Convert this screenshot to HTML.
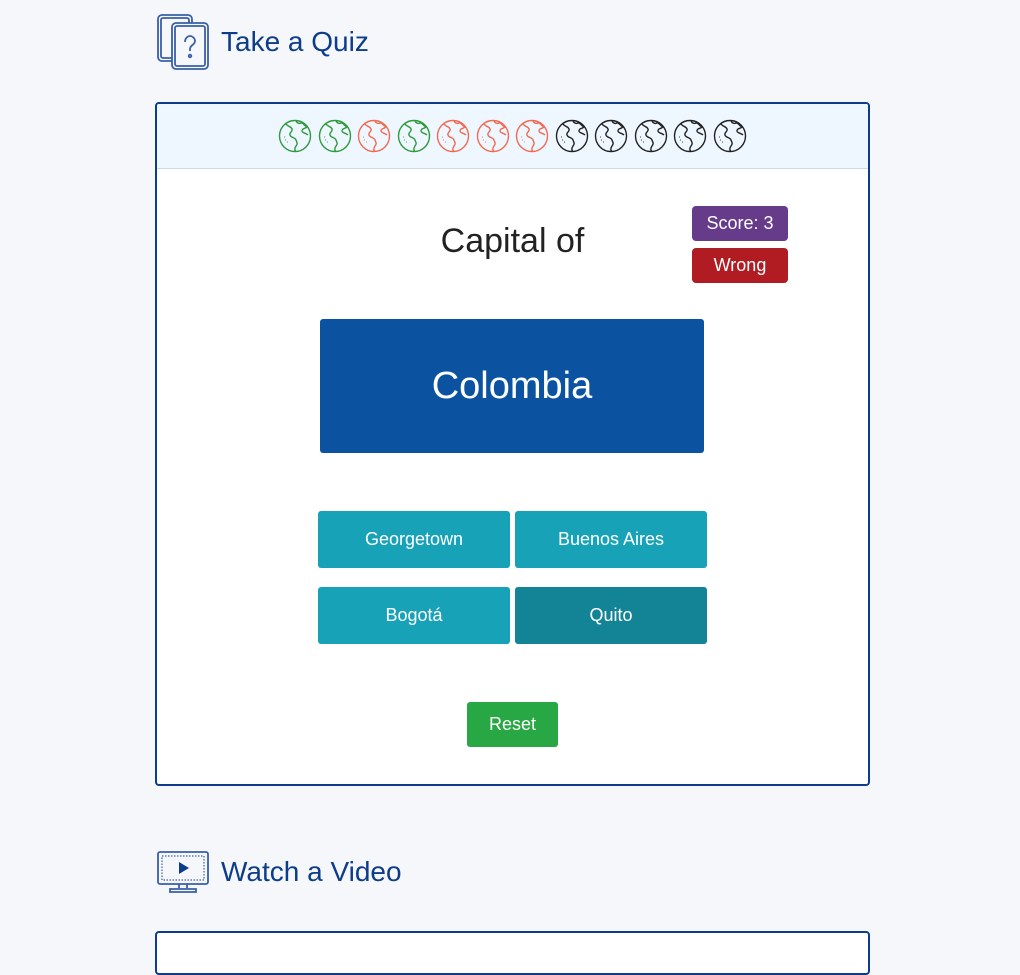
<!DOCTYPE html>
<html><head><meta charset="utf-8"><style>
body{margin:0;background:#f5f7fb;font-family:"Liberation Sans",sans-serif;width:1020px;height:945px;overflow:hidden;position:relative}
.h{position:absolute;left:157px;color:#0d3d8a;font-size:28px;display:flex;align-items:center}
.h span{margin-left:12px}
.card{position:absolute;left:155px;top:102px;width:711px;height:680px;border:2px solid #0d3d8a;border-radius:4px;background:#fff;overflow:hidden}
.top{height:64px;background:#eef6ff;border-bottom:1px solid #cfd8e3;display:flex;justify-content:center;align-items:center;gap:5.5px}
.title{position:absolute;left:0;width:711px;top:118px;text-align:center;font-size:34px;color:#222}
.badge{position:absolute;left:535px;width:96px;height:35px;border-radius:4px;color:#fff;font-size:18px;text-align:center;line-height:35px}
.country{position:absolute;left:163px;top:215px;width:384px;height:134px;background:#0b53a1;color:#fff;font-size:38px;text-align:center;line-height:134px;border-radius:3px}
.btn{position:absolute;width:192px;height:57px;background:#17a2b8;color:#fff;font-size:18px;text-align:center;line-height:56px;border-radius:3px}
.reset{position:absolute;left:310px;top:598px;width:91px;height:45px;background:#28a745;color:#fff;font-size:18px;text-align:center;line-height:45px;border-radius:3px}
.card2{position:absolute;left:155px;top:931px;width:711px;height:40px;border:2px solid #0d3d8a;border-radius:4px;background:#fff}
</style></head><body>
<div class="h" style="top:14px">
<svg width="52" height="56" viewBox="0 0 52 56" fill="none" stroke="#3a5fa6" stroke-width="1.8"><rect x="1" y="1" width="34" height="46" rx="4"/><rect x="4" y="4" width="28" height="40" rx="2"/><rect x="15" y="9" width="36" height="46" rx="4" fill="#f5f7fb"/><rect x="18" y="12" width="30" height="40" rx="2"/><path d="M28 28c0-4 3-6 5-6s5 2 5 5c0 4-5 4-5 8v2"/><circle cx="33" cy="42" r="1.3"/></svg>
<span>Take a Quiz</span></div>
<div class="card">
<div class="top" id="g"></div>
<div class="title">Capital of</div>
<div class="badge" style="top:102px;background:#663b8a">Score: 3</div>
<div class="badge" style="top:144px;background:#b01c22">Wrong</div>
<div class="country">Colombia</div>
<div class="btn" style="left:161px;top:407px">Georgetown</div>
<div class="btn" style="left:358px;top:407px">Buenos Aires</div>
<div class="btn" style="left:161px;top:483px">Bogotá</div>
<div class="btn" style="left:358px;top:483px;background:#138496">Quito</div>
<div class="reset">Reset</div>
</div>
<div class="h" style="top:851px">
<svg width="52" height="42" viewBox="0 0 52 42" fill="none" stroke="#3a5fa6" stroke-width="1.8"><rect x="1" y="1" width="50" height="32" rx="2"/><rect x="5" y="5" width="42" height="24" stroke-dasharray="1.5 1.5" stroke-width="1.2"/><path d="M22 11l10 6-10 6z" fill="#0d3d8a" stroke="none"/><path d="M22 33v4M30 33v4M13 38h26v3H13z"/></svg>
<span>Watch a Video</span></div>
<div class="card2"></div>
<script>
var c=["#2e9a3a","#2e9a3a","#f26a50","#2e9a3a","#f26a50","#f26a50","#f26a50","#222","#222","#222","#222","#222"],h="";
c.forEach(function(x){h+='<svg width="34" height="34" viewBox="0 0 34 34" fill="none" stroke="'+x+'" stroke-width="1.4"><circle cx="17" cy="17" r="15.5"/><path d="M8 5c2 3 5 2 6 5s-3 3-2 6 5 2 6 5 2 3 0 6-1 5 0 5M18 2c1 2 3 3 5 2s3 3 6 4c-2 2-5 1-5 4 0 2 4 2 6 4"/><path d="M6 18h.5M7 21h.5M9 23h.5" stroke-width="1.8"/></svg>'});
document.getElementById("g").innerHTML=h;
</script>
</body></html>
